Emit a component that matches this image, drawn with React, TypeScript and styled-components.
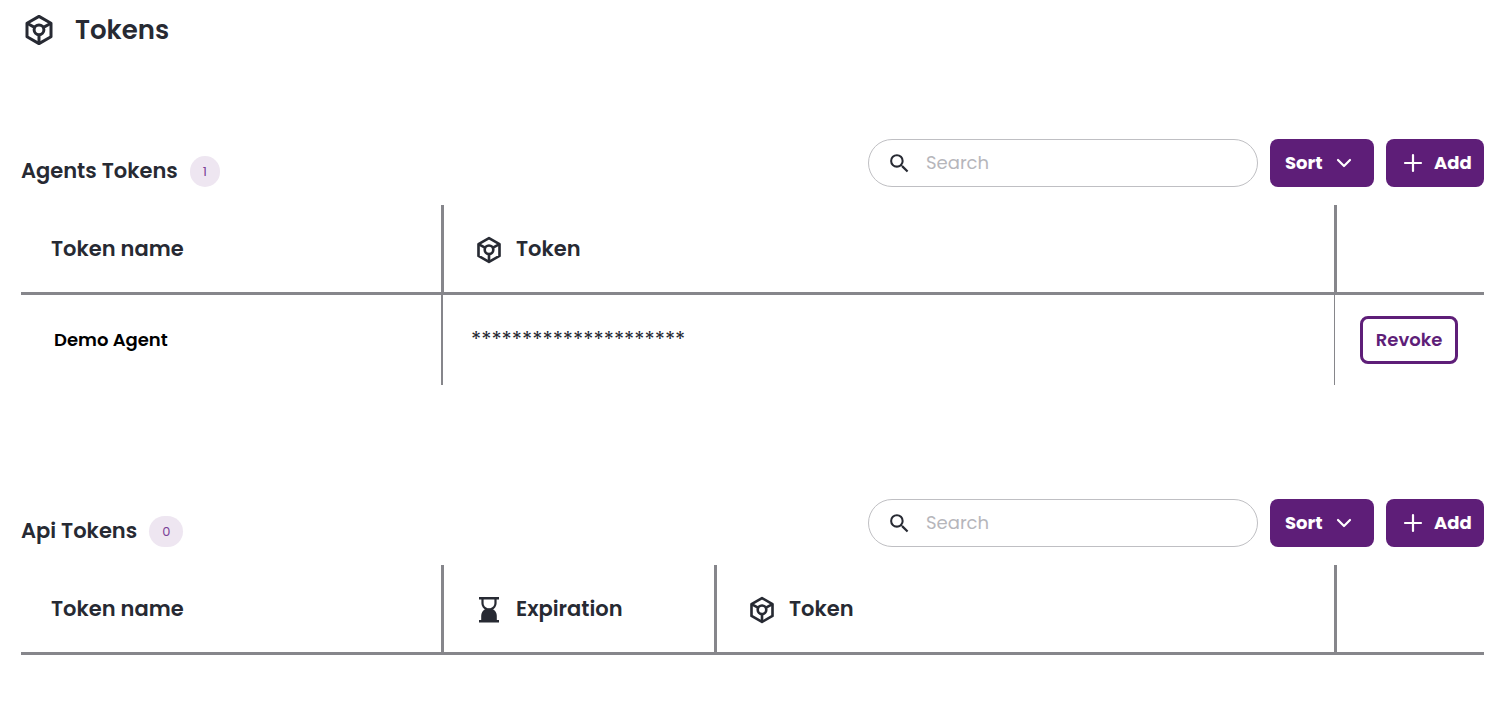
import React from "react";
import styled, { createGlobalStyle } from "styled-components";

const ink = "#272a33";
const purple = "#5e1e78";
const line = "#86868b";

const GlobalStyle = createGlobalStyle`
  *, *::before, *::after { box-sizing: border-box; }
  body {
    margin: 0;
    background: #fff;
    color: ${ink};
    font-family: Poppins, Inter, "Liberation Sans", sans-serif;
  }
  button, input { font-family: inherit; }
  svg { flex: none; }
`;

const Page = styled.main`
  padding: 8px 24px 24px 21px;
`;

const PageHeader = styled.header`
  display: flex;
  align-items: center;
  gap: 20px;
  height: 44px;
  padding-left: 2px;
`;

const PageTitle = styled.h1`
  margin: 0;
  font-size: 26px;
  line-height: 40px;
  font-weight: 600;
`;

const Section = styled.section<{ $first?: boolean }>`
  margin-top: ${(p) => (p.$first ? 87 : 114)}px;
`;

const Toolbar = styled.div`
  display: flex;
  align-items: center;
  gap: 12px;
  height: 48px;
  margin-bottom: 18px;
`;

const Heading = styled.div`
  display: flex;
  align-items: center;
  gap: 12px;
  margin-right: auto;
  padding-top: 16px;
`;

const SectionTitle = styled.h2`
  margin: 0;
  font-size: 21px;
  line-height: 32px;
  font-weight: 600;
  white-space: nowrap;
`;

const Badge = styled.span`
  padding: 0 13px;
  border-radius: 16px;
  background: #eee6f1;
  color: #7b3f98;
  font-size: 13px;
  line-height: 31px;
`;

const SearchBox = styled.label`
  display: flex;
  align-items: center;
  gap: 14px;
  flex: 0 1 390px;
  min-width: 0;
  height: 48px;
  padding: 0 18px;
  border: 1px solid #bfbfc3;
  border-radius: 24px;
`;

const SearchInput = styled.input`
  flex: 1;
  min-width: 0;
  padding: 0;
  border: 0;
  outline: 0;
  background: transparent;
  color: ${ink};
  font-size: 18px;
  line-height: 24px;
  &::placeholder { color: #b6b6bb; opacity: 1; }
`;

const Button = styled.button<{ $width: number }>`
  display: inline-flex;
  flex: none;
  align-items: center;
  gap: 9px;
  width: ${(p) => p.$width}px;
  height: 48px;
  padding: 0 8px 0 15px;
  border: 0;
  border-radius: 8px;
  background: ${purple};
  color: #fff;
  font-size: 18px;
  line-height: 24px;
  font-weight: 700;
  cursor: pointer;
`;

const RevokeButton = styled(Button)`
  justify-content: center;
  padding: 0;
  border: 3px solid ${purple};
  background: #fff;
  color: ${purple};
  font-weight: 600;
`;

const Table = styled.table`
  width: 100%;
  table-layout: fixed;
  border-collapse: separate;
  border-spacing: 0;
`;

const HeadCell = styled.th<{ $width?: number }>`
  width: ${(p) => (p.$width ? `${p.$width}px` : "auto")};
  height: 90px;
  padding: 0 30px;
  border-bottom: 3px solid ${line};
  text-align: left;
  font-size: 21px;
  line-height: 32px;
  font-weight: 600;
  & + & { border-left: 3px solid ${line}; }
`;

const HeadLabel = styled.span`
  display: flex;
  align-items: center;
  gap: 13px;
  padding-left: 1px;
  svg { margin-top: 2px; }
`;

const Cell = styled.td<{ $rule?: number }>`
  height: 90px;
  padding: 0 ${(p) => (p.$rule === 1 ? 25 : 28)}px;
  border-left: ${(p) => p.$rule ?? 0}px solid ${line};
  font-size: 21px;
  line-height: 24px;
`;

const NameCell = styled.th`
  height: 90px;
  padding: 0 33px;
  color: #000;
  text-align: left;
  font-size: 18px;
  line-height: 24px;
  font-weight: 600;
`;

function CubeIcon({ size }: { size: number }) {
  return (
    <svg width={size} height={size} viewBox="0 0 32 32" fill="none" stroke={ink} strokeWidth="3" strokeLinejoin="round" aria-hidden="true">
      <path d="M16 2.400 28 9.200v13.600L16 29.600 4 22.800V9.200Z" />
      <circle cx="16" cy="15.800" r="4.900" />
      <path d="M4.500 9.500 12 13.600M27.500 9.500 20 13.600M16 21v8.400" />
    </svg>
  );
}

function HourglassIcon() {
  return (
    <svg width="28" height="28" viewBox="0 0 28 28" fill={ink} aria-hidden="true">
      <path d="M4 1h20v2.400H4zM4 24h20v2.600H4z" />
      <path d="M7.500 3v4.200c0 3 2.200 5 4.500 6.100h4c2.300-1.100 4.500-3.100 4.500-6.100V3" fill="none" stroke={ink} strokeWidth="2.200" />
      <path d="M11 12.800h6c3.300 1.400 4.800 4 4.800 7.200v5H6.200v-5c0-3.200 1.500-5.800 4.800-7.200Z" />
    </svg>
  );
}

function SearchIcon() {
  return (
    <svg width="25" height="25" viewBox="0 0 24 24" fill={ink} aria-hidden="true">
      <path d="M15.500 14h-.79l-.28-.27A6.471 6.471 0 0 0 16 9.500 6.500 6.500 0 1 0 9.500 16c1.610 0 3.090-.59 4.230-1.570l.27.28v.79l5 4.990L20.490 19l-4.990-5zm-6 0C7.010 14 5 11.990 5 9.500S7.010 5 9.500 5 14 7.010 14 9.500 11.990 14 9.500 14z" />
    </svg>
  );
}

function ChevronIcon() {
  return (
    <svg width="24" height="24" viewBox="0 0 24 24" fill="none" stroke="#fff" strokeWidth="2.200" strokeLinecap="round" strokeLinejoin="round" aria-hidden="true">
      <path d="m6 9 6 6 6-6" />
    </svg>
  );
}

function PlusIcon() {
  return (
    <svg width="24" height="24" viewBox="0 0 24 24" fill="none" stroke="#fff" strokeWidth="2.200" strokeLinecap="round" aria-hidden="true">
      <path d="M12 4v16M4 12h16" />
    </svg>
  );
}

function SectionToolbar({ title, count }: { title: string; count: number }) {
  return (
    <Toolbar>
      <Heading>
        <SectionTitle>{title}</SectionTitle>
        <Badge>{count}</Badge>
      </Heading>
      <SearchBox>
        <SearchIcon />
        <SearchInput type="text" placeholder="Search" aria-label={`Search ${title}`} />
      </SearchBox>
      <Button type="button" $width={104}>
        Sort
        <ChevronIcon />
      </Button>
      <Button type="button" $width={98}>
        <PlusIcon />
        Add
      </Button>
    </Toolbar>
  );
}

export default function App() {
  return (
    <>
      <GlobalStyle />
      <Page>
        <PageHeader>
          <CubeIcon size={32} />
          <PageTitle>Tokens</PageTitle>
        </PageHeader>

        <Section $first>
          <SectionToolbar title="Agents Tokens" count={1} />
          <Table>
            <thead>
              <tr>
                <HeadCell scope="col" $width={420}>Token name</HeadCell>
                <HeadCell scope="col">
                  <HeadLabel><CubeIcon size={28} />Token</HeadLabel>
                </HeadCell>
                <HeadCell scope="col" $width={150} aria-label="Actions" />
              </tr>
            </thead>
            <tbody>
              <tr>
                <NameCell scope="row">Demo Agent</NameCell>
                <Cell $rule={2}>*********************</Cell>
                <Cell $rule={1}>
                  <RevokeButton type="button" $width={98}>Revoke</RevokeButton>
                </Cell>
              </tr>
            </tbody>
          </Table>
        </Section>

        <Section>
          <SectionToolbar title="Api Tokens" count={0} />
          <Table>
            <thead>
              <tr>
                <HeadCell scope="col" $width={420}>Token name</HeadCell>
                <HeadCell scope="col" $width={273}>
                  <HeadLabel><HourglassIcon />Expiration</HeadLabel>
                </HeadCell>
                <HeadCell scope="col">
                  <HeadLabel><CubeIcon size={28} />Token</HeadLabel>
                </HeadCell>
                <HeadCell scope="col" $width={150} aria-label="Actions" />
              </tr>
            </thead>
          </Table>
        </Section>
      </Page>
    </>
  );
}
